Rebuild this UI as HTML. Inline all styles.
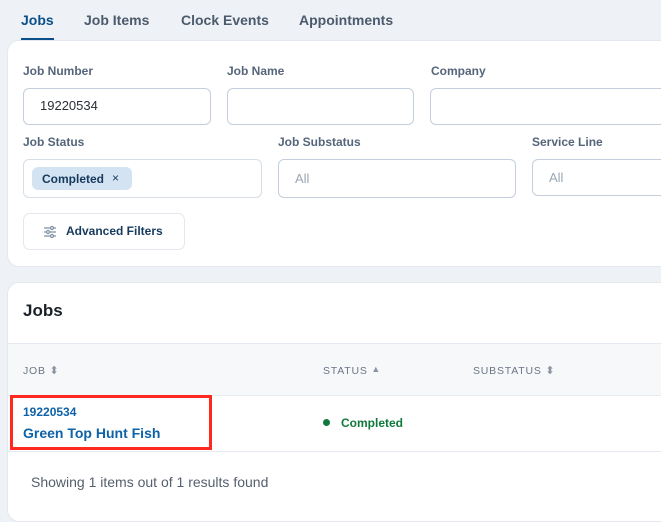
<!DOCTYPE html>
<html><head><meta charset="utf-8"><style>
*{box-sizing:border-box;margin:0;padding:0}
body{width:661px;height:512px;overflow:hidden;background:#eef2f7;font-family:"Liberation Sans",Arial,sans-serif;position:relative}
.a{position:absolute;white-space:nowrap}
.tab{top:12px;font-size:14px;font-weight:bold;color:#4b5a6c}
.card{position:absolute;left:7px;width:680px;background:#fff;border:1px solid #e3e8ef;border-radius:12px}
.lbl{font-size:12px;font-weight:bold;color:#55657a}
.inp{position:absolute;border:1px solid #c3cfdc;border-radius:6px;background:#fff}
.ph{font-size:13px;color:#9aa6b5}
.th{font-size:10.5px;color:#6b7685;letter-spacing:.8px;top:364px}
.s{color:#8a94a2;font-size:11px}
</style></head><body>
<div class="a tab" style="left:21px;color:#0b4f8a">Jobs</div>
<div class="a" style="left:21px;top:38px;width:33px;height:2px;background:#0b4f8a"></div>
<div class="a tab" style="left:84px">Job Items</div>
<div class="a tab" style="left:181px">Clock Events</div>
<div class="a tab" style="left:299px">Appointments</div>

<div class="card" style="top:40px;height:227px"></div>
<div class="a lbl" style="left:23px;top:64px">Job Number</div>
<div class="a lbl" style="left:227px;top:64px">Job Name</div>
<div class="a lbl" style="left:431px;top:64px">Company</div>
<div class="inp" style="left:23px;top:88px;width:188px;height:37px"></div>
<div class="a" style="left:40px;top:98px;font-size:13px;color:#2a2f36">19220534</div>
<div class="inp" style="left:227px;top:88px;width:187px;height:37px"></div>
<div class="inp" style="left:430px;top:88px;width:260px;height:37px"></div>

<div class="a lbl" style="left:23px;top:135px">Job Status</div>
<div class="a lbl" style="left:278px;top:135px">Job Substatus</div>
<div class="a lbl" style="left:532px;top:135px">Service Line</div>
<div class="inp" style="left:23px;top:159px;width:239px;height:39px;border-color:#d6dee8"></div>
<div class="a" style="left:32px;top:167px;width:100px;height:23px;background:#d4e3f2;border-radius:6px"></div>
<div class="a" style="left:42px;top:172px;font-size:12px;font-weight:bold;color:#153a5e">Completed</div>
<div class="a" style="left:112px;top:171px;font-size:12px;color:#153a5e">×</div>
<div class="inp" style="left:278px;top:159px;width:238px;height:39px"></div>
<div class="a ph" style="left:295px;top:171px">All</div>
<div class="inp" style="left:532px;top:159px;width:160px;height:37px"></div>
<div class="a ph" style="left:549px;top:170px">All</div>

<div class="a" style="left:23px;top:213px;width:162px;height:37px;border:1px solid #e3e8ef;border-radius:7px;background:#fff"></div>
<svg class="a" style="left:43px;top:225px" width="14" height="14" viewBox="0 0 14 14" fill="none" stroke="#7f90a6" stroke-width="1.2"><path d="M1 3h12M1 7h12M1 11h12"/><circle cx="9" cy="3" r="1.5" fill="#fff"/><circle cx="5" cy="7" r="1.5" fill="#fff"/><circle cx="9" cy="11" r="1.5" fill="#fff"/></svg>
<div class="a" style="left:66px;top:224px;font-size:12px;font-weight:bold;color:#153a5e">Advanced Filters</div>

<div class="card" style="top:282px;height:240px;overflow:hidden">
<div style="position:absolute;left:0;top:60px;width:100%;height:53px;background:#f7f8fa;border-top:1px solid #e6ebf1;border-bottom:1px solid #e6ebf1"></div>
<div style="position:absolute;left:0;top:168px;width:100%;height:1px;background:#e6ebf1"></div>
</div>
<div class="a" style="left:23px;top:301px;font-size:17px;font-weight:bold;color:#1c2128">Jobs</div>
<div class="a th" style="left:23px">JOB <span class="s">⬍</span></div>
<div class="a th" style="left:323px">STATUS <span class="s" style="font-size:9px;vertical-align:2px">▲</span></div>
<div class="a th" style="left:473px">SUBSTATUS <span class="s">⬍</span></div>

<div class="a" style="left:10px;top:395px;width:202px;height:55px;border:3px solid #ff2a1f"></div>
<div class="a" style="left:23px;top:405px;font-size:12px;font-weight:bold;color:#0d62a8">19220534</div>
<div class="a" style="left:23px;top:425px;font-size:14px;font-weight:bold;color:#0d62a8">Green Top Hunt Fish</div>
<div class="a" style="left:323px;top:419px;width:7px;height:7px;border-radius:50%;background:#0f7a3c"></div>
<div class="a" style="left:341px;top:416px;font-size:12px;font-weight:bold;color:#0f7a3c">Completed</div>
<div class="a" style="left:31px;top:474px;font-size:14px;color:#55606e">Showing 1 items out of 1 results found</div>
</body></html>
